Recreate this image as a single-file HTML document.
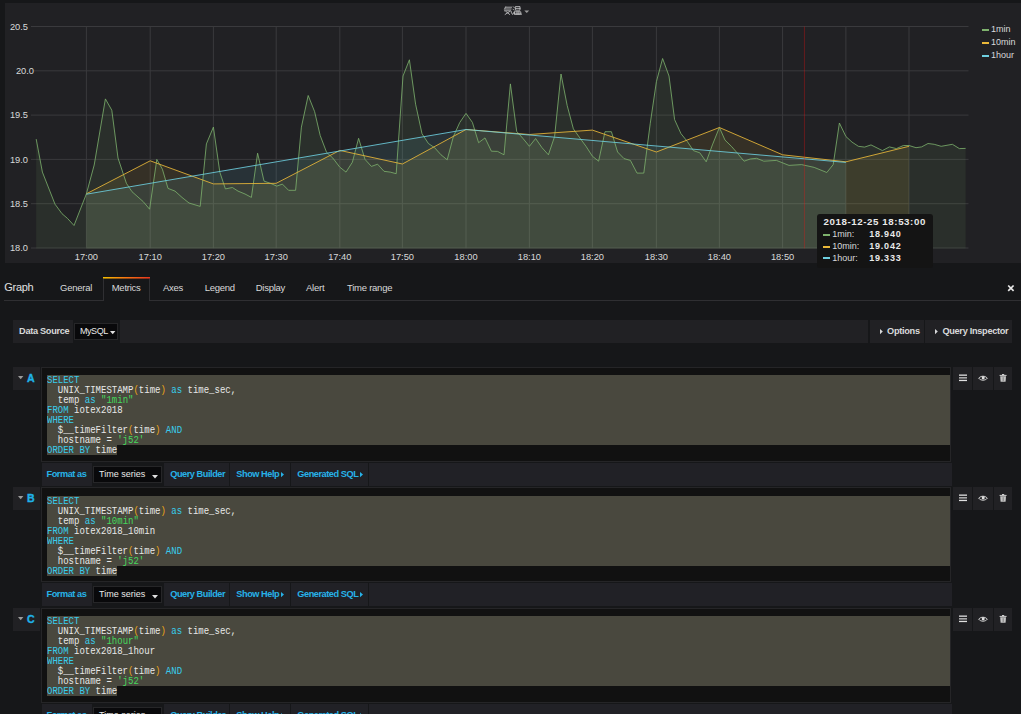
<!DOCTYPE html>
<html><head><meta charset="utf-8"><style>
html,body{margin:0;padding:0}
body{width:1021px;height:714px;overflow:hidden;background:#161719;position:relative;font-family:"Liberation Sans",sans-serif;color:#d8d9da}
.panel{position:absolute;left:5px;top:2.7px;width:1016px;height:260px;background:#212124}
.chart{position:absolute;left:0;top:0}
.tk{font-family:"Liberation Sans",sans-serif;font-size:9.3px;fill:#d8d9da}
.legend{position:absolute;left:982px;top:23.2px;font-size:9px;line-height:13px;color:#d8d9da}
.legend div{position:relative;padding-left:9px;white-space:nowrap}
.legend i{position:absolute;left:0;top:6px;width:7px;height:2px}
.tip{position:absolute;left:817.2px;top:214.1px;width:116.3px;height:54px;background:#141414;border-radius:3px;font-size:9px;color:#d8d9da}
.tip b{position:absolute;font-weight:bold;color:#e9e9e9;letter-spacing:0.8px}
.tip span{position:absolute;white-space:nowrap}
.tip i{position:absolute;width:7px;height:2px}
.abs{position:absolute;white-space:nowrap}
.tab{position:absolute;top:282px;font-size:9.5px;color:#d8d9da;white-space:nowrap;letter-spacing:-0.25px}
.tabline{position:absolute;left:4px;top:300px;width:1017px;height:1px;background:#2f2f32}
.atab{position:absolute;left:103.4px;top:277px;width:44.6px;height:24px;background:#161719;border-left:1px solid #2f2f32;border-right:1px solid #2f2f32}
.atab:before{content:"";position:absolute;left:-1px;right:-1px;top:0;height:2px;background:linear-gradient(180deg,rgba(22,23,25,0) 50%,rgba(22,23,25,0.45) 50%),linear-gradient(90deg,#f5c000,#f97a10 45%,#e8351e)}
.box{position:absolute;background:#212124}
.lbl{position:absolute;font-weight:bold;font-size:9.2px;letter-spacing:-0.3px;color:#d8d9da;white-space:nowrap}
.sb{position:absolute;left:13.2px;width:26.8px;height:22.7px;background:#212124}
.car{position:absolute;left:4.5px;top:8.8px}
.ql{position:absolute;left:13.8px;top:5.4px;font-weight:bold;font-size:10.6px;color:#1fb2e8;-webkit-text-stroke:0.35px #1fb2e8}
.code{position:absolute;left:40.7px;width:910px;height:95px;background:#111111;border:1px solid #252527;box-sizing:border-box}
.sel{position:absolute;left:5.3px;width:903px;height:70px;background:#49483e}
.sel2{position:absolute;left:5.3px;width:70.3px;height:10px;background:#49483e}
.code pre{position:absolute;left:5.3px;margin:0;font-family:"Liberation Mono",monospace;font-size:10px;line-height:10px;color:#e8e8e8;transform:scaleX(0.9);transform-origin:0 0}
.k{color:#38cdec} .p{color:#eba51a} .s{color:#45d85c}
.frow{position:absolute;left:41.5px;width:911px;height:22.7px}
.fb{position:absolute;top:0;height:22.7px;background:#212126}
.bl{position:absolute;top:6px;font-weight:bold;font-size:9.2px;letter-spacing:-0.45px;color:#27b2e8;white-space:nowrap}
.selbox{position:absolute;top:3.3px;height:16.6px;background:#09090b;border:1px solid #262628;box-sizing:border-box}
.wt{position:absolute;top:2px;font-size:9px;color:#e9e9e9;white-space:nowrap}
.cw{position:absolute;left:57.8px;top:7.6px}
.tri{position:absolute;top:8.6px}
.ib{position:absolute;width:18.9px;height:22.6px;background:#212124}
.ib svg{position:absolute;left:0;top:0}
</style></head><body>
<div class="panel"></div>
<svg class="chart" width="1021" height="263" viewBox="0 0 1021 263">
<line x1="31" y1="26.5" x2="968.5" y2="26.5" stroke="#3a3a3d" stroke-width="1"/>
<line x1="34" y1="70.8" x2="968.5" y2="70.8" stroke="#3a3a3d" stroke-width="1"/>
<line x1="31" y1="115.1" x2="968.5" y2="115.1" stroke="#3a3a3d" stroke-width="1"/>
<line x1="31" y1="159.4" x2="968.5" y2="159.4" stroke="#3a3a3d" stroke-width="1"/>
<line x1="31" y1="203.7" x2="968.5" y2="203.7" stroke="#3a3a3d" stroke-width="1"/>
<line x1="31" y1="248.0" x2="968.5" y2="248.0" stroke="#3a3a3d" stroke-width="1"/>
<line x1="86.4" y1="26.5" x2="86.4" y2="248.4" stroke="#3a3a3d" stroke-width="1"/>
<line x1="150.2" y1="26.5" x2="150.2" y2="248.4" stroke="#3a3a3d" stroke-width="1"/>
<line x1="213.4" y1="26.5" x2="213.4" y2="248.4" stroke="#3a3a3d" stroke-width="1"/>
<line x1="276.2" y1="26.5" x2="276.2" y2="248.4" stroke="#3a3a3d" stroke-width="1"/>
<line x1="339.8" y1="26.5" x2="339.8" y2="248.4" stroke="#3a3a3d" stroke-width="1"/>
<line x1="402.4" y1="26.5" x2="402.4" y2="248.4" stroke="#3a3a3d" stroke-width="1"/>
<line x1="466" y1="26.5" x2="466" y2="248.4" stroke="#3a3a3d" stroke-width="1"/>
<line x1="529.4" y1="26.5" x2="529.4" y2="248.4" stroke="#3a3a3d" stroke-width="1"/>
<line x1="592.4" y1="26.5" x2="592.4" y2="248.4" stroke="#3a3a3d" stroke-width="1"/>
<line x1="656.4" y1="26.5" x2="656.4" y2="248.4" stroke="#3a3a3d" stroke-width="1"/>
<line x1="719.4" y1="26.5" x2="719.4" y2="248.4" stroke="#3a3a3d" stroke-width="1"/>
<line x1="782.6" y1="26.5" x2="782.6" y2="248.4" stroke="#3a3a3d" stroke-width="1"/>
<line x1="845.9" y1="26.5" x2="845.9" y2="248.4" stroke="#3a3a3d" stroke-width="1"/>
<line x1="909" y1="26.5" x2="909" y2="248.4" stroke="#3a3a3d" stroke-width="1"/>
<polygon points="36.2,139.1 42.4,172.1 55.0,204.2 62.0,213.7 67.6,218.5 74.0,225.5 86.4,193.8 94.2,165.0 105.4,98.9 111.8,110.2 118.0,158.0 126.4,183.3 132.0,191.7 143.2,201.6 149.6,209.2 156.8,159.4 162.4,169.2 168.0,188.4 175.0,191.1 182.0,197.4 189.0,203.0 200.2,206.4 206.4,143.9 213.4,127.1 219.8,172.1 225.4,188.9 232.4,187.5 238.0,191.1 245.0,194.0 251.4,197.4 257.6,153.2 264.0,181.1 270.4,183.3 276.8,186.1 282.4,184.1 288.6,190.3 295.6,190.3 301.4,127.1 308.2,95.5 314.6,111.6 320.2,135.5 326.6,152.4 332.8,158.0 339.8,167.2 346.0,172.1 352.4,162.2 358.6,138.3 365.0,159.4 371.4,166.4 377.6,164.2 384.0,171.3 390.2,172.1 396.2,173.7 403.0,76.0 409.4,59.8 415.6,104.2 422.0,133.7 428.4,143.5 434.6,147.7 441.0,154.8 447.2,159.8 453.4,136.5 459.8,122.4 466.0,113.4 472.4,122.4 478.6,142.7 485.0,137.9 491.4,151.2 497.6,151.4 504.0,154.8 510.4,83.9 516.7,131.4 523.0,138.5 529.4,146.3 535.6,138.5 542.0,147.7 548.4,154.8 554.6,136.5 561.0,74.0 567.2,105.6 573.4,128.9 579.8,137.9 586.0,146.3 592.4,156.2 598.6,161.2 605.0,131.7 611.4,131.7 617.6,152.0 624.0,158.6 630.4,160.4 637.0,173.1 643.8,173.1 650.2,123.8 656.4,81.7 662.6,58.5 669.0,76.0 674.6,119.6 681.0,133.7 687.2,141.3 693.4,150.6 699.8,152.8 706.2,161.8 712.4,144.9 719.4,127.5 725.0,140.1 731.4,146.3 737.6,153.4 744.0,161.2 750.2,159.0 756.7,158.3 763.8,161.2 776.4,160.4 789.0,165.4 801.6,164.6 814.2,167.4 826.8,172.5 833.2,164.6 839.4,123.0 845.9,136.5 852.0,142.1 858.4,146.3 864.6,147.1 871.0,144.9 882.4,150.6 889.4,146.9 896.4,148.6 903.4,145.5 909.0,145.5 916.0,147.7 921.6,146.9 928.0,143.5 934.2,144.3 941.2,146.3 952.4,144.3 959.4,148.6 965.6,148.4 965.6,248.4 36.2,248.4" fill="#7EB26D" fill-opacity="0.1"/>
<polygon points="86.4,193.8 150.2,160.8 213.4,183.9 276.2,183.3 339.8,150.4 402.4,164.0 466.0,129.5 529.4,134.5 592.4,130.1 656.4,152.0 719.4,127.5 782.6,154.8 845.9,161.8 909.0,146.3 909.0,248.4 86.4,248.4" fill="#EAB839" fill-opacity="0.1"/>
<polygon points="86.4,194.2 466.0,129.5 845.9,162.4 845.9,248.4 86.4,248.4" fill="#6ED0E0" fill-opacity="0.1"/>
<polyline points="36.2,139.1 42.4,172.1 55.0,204.2 62.0,213.7 67.6,218.5 74.0,225.5 86.4,193.8 94.2,165.0 105.4,98.9 111.8,110.2 118.0,158.0 126.4,183.3 132.0,191.7 143.2,201.6 149.6,209.2 156.8,159.4 162.4,169.2 168.0,188.4 175.0,191.1 182.0,197.4 189.0,203.0 200.2,206.4 206.4,143.9 213.4,127.1 219.8,172.1 225.4,188.9 232.4,187.5 238.0,191.1 245.0,194.0 251.4,197.4 257.6,153.2 264.0,181.1 270.4,183.3 276.8,186.1 282.4,184.1 288.6,190.3 295.6,190.3 301.4,127.1 308.2,95.5 314.6,111.6 320.2,135.5 326.6,152.4 332.8,158.0 339.8,167.2 346.0,172.1 352.4,162.2 358.6,138.3 365.0,159.4 371.4,166.4 377.6,164.2 384.0,171.3 390.2,172.1 396.2,173.7 403.0,76.0 409.4,59.8 415.6,104.2 422.0,133.7 428.4,143.5 434.6,147.7 441.0,154.8 447.2,159.8 453.4,136.5 459.8,122.4 466.0,113.4 472.4,122.4 478.6,142.7 485.0,137.9 491.4,151.2 497.6,151.4 504.0,154.8 510.4,83.9 516.7,131.4 523.0,138.5 529.4,146.3 535.6,138.5 542.0,147.7 548.4,154.8 554.6,136.5 561.0,74.0 567.2,105.6 573.4,128.9 579.8,137.9 586.0,146.3 592.4,156.2 598.6,161.2 605.0,131.7 611.4,131.7 617.6,152.0 624.0,158.6 630.4,160.4 637.0,173.1 643.8,173.1 650.2,123.8 656.4,81.7 662.6,58.5 669.0,76.0 674.6,119.6 681.0,133.7 687.2,141.3 693.4,150.6 699.8,152.8 706.2,161.8 712.4,144.9 719.4,127.5 725.0,140.1 731.4,146.3 737.6,153.4 744.0,161.2 750.2,159.0 756.7,158.3 763.8,161.2 776.4,160.4 789.0,165.4 801.6,164.6 814.2,167.4 826.8,172.5 833.2,164.6 839.4,123.0 845.9,136.5 852.0,142.1 858.4,146.3 864.6,147.1 871.0,144.9 882.4,150.6 889.4,146.9 896.4,148.6 903.4,145.5 909.0,145.5 916.0,147.7 921.6,146.9 928.0,143.5 934.2,144.3 941.2,146.3 952.4,144.3 959.4,148.6 965.6,148.4" fill="none" stroke="#7EB26D" stroke-width="0.8" stroke-linejoin="round"/>
<polyline points="86.4,193.8 150.2,160.8 213.4,183.9 276.2,183.3 339.8,150.4 402.4,164.0 466.0,129.5 529.4,134.5 592.4,130.1 656.4,152.0 719.4,127.5 782.6,154.8 845.9,161.8 909.0,146.3" fill="none" stroke="#EAB839" stroke-width="0.85" stroke-linejoin="round"/>
<polyline points="86.4,194.2 466.0,129.5 845.9,162.4" fill="none" stroke="#6ED0E0" stroke-width="0.85" stroke-linejoin="round"/>
<line x1="804.4" y1="26.5" x2="804.4" y2="248.4" stroke="#ff1010" stroke-opacity="0.32" stroke-width="1"/>
<text x="28" y="29.8" text-anchor="end" class="tk">20.5</text>
<text x="34" y="74.1" text-anchor="end" class="tk">20.0</text>
<text x="28" y="118.39999999999999" text-anchor="end" class="tk">19.5</text>
<text x="28" y="162.70000000000002" text-anchor="end" class="tk">19.0</text>
<text x="28" y="207.0" text-anchor="end" class="tk">18.5</text>
<text x="28" y="251.3" text-anchor="end" class="tk">18.0</text>
<text x="86.4" y="259.5" text-anchor="middle" class="tk">17:00</text>
<text x="150.2" y="259.5" text-anchor="middle" class="tk">17:10</text>
<text x="213.4" y="259.5" text-anchor="middle" class="tk">17:20</text>
<text x="276.2" y="259.5" text-anchor="middle" class="tk">17:30</text>
<text x="339.8" y="259.5" text-anchor="middle" class="tk">17:40</text>
<text x="402.4" y="259.5" text-anchor="middle" class="tk">17:50</text>
<text x="466" y="259.5" text-anchor="middle" class="tk">18:00</text>
<text x="529.4" y="259.5" text-anchor="middle" class="tk">18:10</text>
<text x="592.4" y="259.5" text-anchor="middle" class="tk">18:20</text>
<text x="656.4" y="259.5" text-anchor="middle" class="tk">18:30</text>
<text x="719.4" y="259.5" text-anchor="middle" class="tk">18:40</text>
<text x="782.6" y="259.5" text-anchor="middle" class="tk">18:50</text>
<text x="845.9" y="259.5" text-anchor="middle" class="tk">19:00</text>
<text x="909" y="259.5" text-anchor="middle" class="tk">19:10</text>
<g stroke="#cfcfd0" stroke-width="0.8" fill="none" stroke-linecap="square"><path d="M505.5,7 L504.5,9.2 M506,7.2 L511.5,7.2 M505.5,9 L511,9 M504.5,10.8 L511,10.8 Q511.2,13 512.3,14.2 M506,11.6 L509.6,14.4 M509.5,11.6 L505.2,14.4"/><path d="M513.4,6.8 L514.2,7.6 M513,9.2 L513.8,10 M513,14 L514.2,11.8 M515.8,6.6 L520,6.6 L520,10.2 L515.8,10.2 Z M515.8,8.4 L520,8.4 M515,11.8 L520.8,11.8 L520.8,14 L515,14 Z M517,11.8 L517,14 M518.9,11.8 L518.9,14 M514.5,14.2 L521.5,14.2"/></g>
<path d="M524.3,10.4 L529.2,10.4 L526.75,13 Z" fill="#9a9a9a"/>
</svg>
<div class="legend">
<div><i style="background:#7EB26D"></i>1min</div>
<div><i style="background:#EAB839"></i>10min</div>
<div><i style="background:#6ED0E0"></i>1hour</div>
</div>
<div class="tip">
<b style="left:6.3px;top:1.6px;font-size:9.7px;letter-spacing:0.6px">2018-12-25 18:53:00</b>
<i style="left:6px;top:19.5px;background:#7EB26D"></i><span style="left:15px;top:15px">1min:</span><b style="left:52px;top:15px">18.940</b>
<i style="left:6px;top:31.5px;background:#EAB839"></i><span style="left:15px;top:27px">10min:</span><b style="left:52px;top:27px">19.042</b>
<i style="left:6px;top:43px;background:#6ED0E0"></i><span style="left:15px;top:38.5px">1hour:</span><b style="left:52px;top:38.5px">19.333</b>
</div>
<div class="tabline"></div>
<div class="atab"></div>
<div class="abs" style="left:4.3px;top:280.5px;font-size:11px;color:#e0e0e0;letter-spacing:-0.3px">Graph</div>
<div class="tab" style="left:60px">General</div>
<div class="tab" style="left:111.7px">Metrics</div>
<div class="tab" style="left:163px">Axes</div>
<div class="tab" style="left:204.7px">Legend</div>
<div class="tab" style="left:255.7px">Display</div>
<div class="tab" style="left:306px">Alert</div>
<div class="tab" style="left:347px">Time range</div>
<svg class="abs" style="left:1007px;top:284px" width="8" height="8"><path d="M1.2,1.5 L6.6,6.9 M6.6,1.5 L1.2,6.9" stroke="#e9e9e9" stroke-width="1.7"/></svg>
<div class="box" style="left:13.2px;top:320px;width:59.8px;height:22.7px"><span class="lbl" style="left:5.9px;top:6px">Data Source</span></div>
<div class="selbox" style="left:73.9px;top:322.8px;width:44.4px;height:17.2px"><span class="wt" style="left:5px;top:2.5px;letter-spacing:-0.4px">MySQL</span><svg class="cw" width="7" height="4" style="left:34.8px;top:7.6px"><path d="M0,0 L5.4,0 L2.7,3.2Z" fill="#e0e0e0"/></svg></div>
<div class="box" style="left:120.2px;top:320px;width:747.7px;height:22.7px"></div>
<div class="box" style="left:870.1px;top:320px;width:53.6px;height:22.7px"><svg class="tri" style="left:10px;top:8.8px" width="4" height="6"><path d="M0,0 L2.8,2.6 L0,5.2Z" fill="#d8d9da"/></svg><span class="lbl" style="left:17px;top:6px">Options</span></div>
<div class="box" style="left:925.4px;top:320px;width:86.6px;height:22.7px"><svg class="tri" style="left:10px;top:8.8px" width="4" height="6"><path d="M0,0 L2.8,2.6 L0,5.2Z" fill="#d8d9da"/></svg><span class="lbl" style="left:17px;top:6px">Query Inspector</span></div>
<div class="sb" style="top:367.0px"><svg class="car" width="6" height="4"><path d="M0,0 L5.4,0 L2.7,3.3Z" fill="#9a9a9a"/></svg><span class="ql">A</span></div>
<div class="code" style="top:367.0px"><div class="sel" style="top:7px"></div><div class="sel2" style="top:77px"></div><pre style="top:8.3px"><span class="k">SELECT</span>
  UNIX_TIMESTAMP<span class="p">(</span>time<span class="p">)</span> <span class="k">as</span> time_sec,
  temp <span class="k">as</span> <span class="s">"1min"</span>
<span class="k">FROM</span> iotex2018
<span class="k">WHERE</span>
  $__timeFilter<span class="p">(</span>time<span class="p">)</span> <span class="k">AND</span>
  hostname = <span class="s">'j52'</span>
<span class="k">ORDER BY</span> time</pre></div>
<div class="frow" style="top:463.0px"><div class="fb" style="left:0;width:50.2px"><span class="bl" style="left:5px">Format as</span></div><div class="selbox" style="left:51.6px;width:69px"><span class="wt" style="left:5px">Time series</span><svg class="cw" width="7" height="4"><path d="M0,0 L6,0 L3,3.5Z" fill="#e0e0e0"/></svg></div><div class="fb" style="left:122.7px;width:65px"><span class="bl" style="left:6px">Query Builder</span></div><div class="fb" style="left:188.8px;width:59.7px"><span class="bl" style="left:6px">Show Help</span><svg class="tri" style="left:51px" width="4" height="6"><path d="M0,0 L3,2.6 L0,5.2Z" fill="#27b2e8"/></svg></div><div class="fb" style="left:249.8px;width:76.7px"><span class="bl" style="left:6px">Generated SQL</span><svg class="tri" style="left:68.5px" width="4" height="6"><path d="M0,0 L3,2.6 L0,5.2Z" fill="#27b2e8"/></svg></div><div class="fb" style="left:327.5px;width:582.8px"></div></div>
<div class="ib" style="top:367.0px;left:953px"><svg width="19" height="22"><rect x="6" y="7.5" width="8" height="1.3" fill="#e0e0e0"/><rect x="6" y="10.2" width="8" height="1.3" fill="#c8c8c8"/><rect x="6" y="12.8" width="8" height="1.3" fill="#e0e0e0"/></svg></div>
<div class="ib" style="top:367.0px;left:973.4px;width:19.7px"><svg width="20" height="22"><path d="M5.7,11.2 C7.6,8.6 12.4,8.6 14.3,11.2 C12.4,13.8 7.6,13.8 5.7,11.2 Z" fill="none" stroke="#e0e0e0" stroke-width="1"/><circle cx="10.2" cy="10.7" r="1.5" fill="#e0e0e0"/></svg></div>
<div class="ib" style="top:367.0px;left:994.2px;width:17.6px"><svg width="18" height="22"><path d="M5.6,8.4 L12.6,8.4 M8,7.5 L10.2,7.5" stroke="#d0d0d0" stroke-width="1"/><path d="M6.2,9.2 L12,9.2 L11.6,14.8 L6.6,14.8 Z" fill="#c4c4c4"/><rect x="8.6" y="10.2" width="1.2" height="3.8" fill="#8a8a8a"/></svg></div>
<div class="sb" style="top:487.0px"><svg class="car" width="6" height="4"><path d="M0,0 L5.4,0 L2.7,3.3Z" fill="#9a9a9a"/></svg><span class="ql">B</span></div>
<div class="code" style="top:487.0px"><div class="sel" style="top:8px"></div><div class="sel2" style="top:78px"></div><pre style="top:9.3px"><span class="k">SELECT</span>
  UNIX_TIMESTAMP<span class="p">(</span>time<span class="p">)</span> <span class="k">as</span> time_sec,
  temp <span class="k">as</span> <span class="s">"10min"</span>
<span class="k">FROM</span> iotex2018_10min
<span class="k">WHERE</span>
  $__timeFilter<span class="p">(</span>time<span class="p">)</span> <span class="k">AND</span>
  hostname = <span class="s">'j52'</span>
<span class="k">ORDER BY</span> time</pre></div>
<div class="frow" style="top:583.2px"><div class="fb" style="left:0;width:50.2px"><span class="bl" style="left:5px">Format as</span></div><div class="selbox" style="left:51.6px;width:69px"><span class="wt" style="left:5px">Time series</span><svg class="cw" width="7" height="4"><path d="M0,0 L6,0 L3,3.5Z" fill="#e0e0e0"/></svg></div><div class="fb" style="left:122.7px;width:65px"><span class="bl" style="left:6px">Query Builder</span></div><div class="fb" style="left:188.8px;width:59.7px"><span class="bl" style="left:6px">Show Help</span><svg class="tri" style="left:51px" width="4" height="6"><path d="M0,0 L3,2.6 L0,5.2Z" fill="#27b2e8"/></svg></div><div class="fb" style="left:249.8px;width:76.7px"><span class="bl" style="left:6px">Generated SQL</span><svg class="tri" style="left:68.5px" width="4" height="6"><path d="M0,0 L3,2.6 L0,5.2Z" fill="#27b2e8"/></svg></div><div class="fb" style="left:327.5px;width:582.8px"></div></div>
<div class="ib" style="top:487.0px;left:953px"><svg width="19" height="22"><rect x="6" y="7.5" width="8" height="1.3" fill="#e0e0e0"/><rect x="6" y="10.2" width="8" height="1.3" fill="#c8c8c8"/><rect x="6" y="12.8" width="8" height="1.3" fill="#e0e0e0"/></svg></div>
<div class="ib" style="top:487.0px;left:973.4px;width:19.7px"><svg width="20" height="22"><path d="M5.7,11.2 C7.6,8.6 12.4,8.6 14.3,11.2 C12.4,13.8 7.6,13.8 5.7,11.2 Z" fill="none" stroke="#e0e0e0" stroke-width="1"/><circle cx="10.2" cy="10.7" r="1.5" fill="#e0e0e0"/></svg></div>
<div class="ib" style="top:487.0px;left:994.2px;width:17.6px"><svg width="18" height="22"><path d="M5.6,8.4 L12.6,8.4 M8,7.5 L10.2,7.5" stroke="#d0d0d0" stroke-width="1"/><path d="M6.2,9.2 L12,9.2 L11.6,14.8 L6.6,14.8 Z" fill="#c4c4c4"/><rect x="8.6" y="10.2" width="1.2" height="3.8" fill="#8a8a8a"/></svg></div>
<div class="sb" style="top:608.0px"><svg class="car" width="6" height="4"><path d="M0,0 L5.4,0 L2.7,3.3Z" fill="#9a9a9a"/></svg><span class="ql">C</span></div>
<div class="code" style="top:608.0px"><div class="sel" style="top:7px"></div><div class="sel2" style="top:77px"></div><pre style="top:8.3px"><span class="k">SELECT</span>
  UNIX_TIMESTAMP<span class="p">(</span>time<span class="p">)</span> <span class="k">as</span> time_sec,
  temp <span class="k">as</span> <span class="s">"1hour"</span>
<span class="k">FROM</span> iotex2018_1hour
<span class="k">WHERE</span>
  $__timeFilter<span class="p">(</span>time<span class="p">)</span> <span class="k">AND</span>
  hostname = <span class="s">'j52'</span>
<span class="k">ORDER BY</span> time</pre></div>
<div class="frow" style="top:704.0px"><div class="fb" style="left:0;width:50.2px"><span class="bl" style="left:5px">Format as</span></div><div class="selbox" style="left:51.6px;width:69px"><span class="wt" style="left:5px">Time series</span><svg class="cw" width="7" height="4"><path d="M0,0 L6,0 L3,3.5Z" fill="#e0e0e0"/></svg></div><div class="fb" style="left:122.7px;width:65px"><span class="bl" style="left:6px">Query Builder</span></div><div class="fb" style="left:188.8px;width:59.7px"><span class="bl" style="left:6px">Show Help</span><svg class="tri" style="left:51px" width="4" height="6"><path d="M0,0 L3,2.6 L0,5.2Z" fill="#27b2e8"/></svg></div><div class="fb" style="left:249.8px;width:76.7px"><span class="bl" style="left:6px">Generated SQL</span><svg class="tri" style="left:68.5px" width="4" height="6"><path d="M0,0 L3,2.6 L0,5.2Z" fill="#27b2e8"/></svg></div><div class="fb" style="left:327.5px;width:582.8px"></div></div>
<div class="ib" style="top:608.0px;left:953px"><svg width="19" height="22"><rect x="6" y="7.5" width="8" height="1.3" fill="#e0e0e0"/><rect x="6" y="10.2" width="8" height="1.3" fill="#c8c8c8"/><rect x="6" y="12.8" width="8" height="1.3" fill="#e0e0e0"/></svg></div>
<div class="ib" style="top:608.0px;left:973.4px;width:19.7px"><svg width="20" height="22"><path d="M5.7,11.2 C7.6,8.6 12.4,8.6 14.3,11.2 C12.4,13.8 7.6,13.8 5.7,11.2 Z" fill="none" stroke="#e0e0e0" stroke-width="1"/><circle cx="10.2" cy="10.7" r="1.5" fill="#e0e0e0"/></svg></div>
<div class="ib" style="top:608.0px;left:994.2px;width:17.6px"><svg width="18" height="22"><path d="M5.6,8.4 L12.6,8.4 M8,7.5 L10.2,7.5" stroke="#d0d0d0" stroke-width="1"/><path d="M6.2,9.2 L12,9.2 L11.6,14.8 L6.6,14.8 Z" fill="#c4c4c4"/><rect x="8.6" y="10.2" width="1.2" height="3.8" fill="#8a8a8a"/></svg></div>
</body></html>
